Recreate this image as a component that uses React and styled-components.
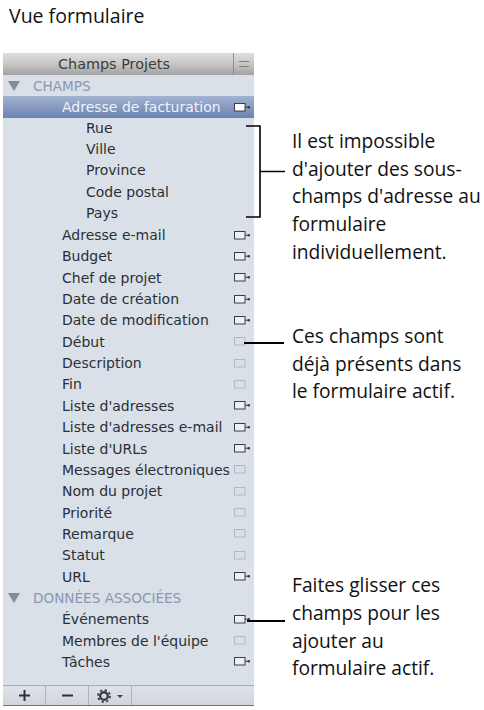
import React from "react";
import styled, { createGlobalStyle } from "styled-components";

const GlobalStyle = createGlobalStyle`
  html, body {
    margin: 0;
    padding: 0;
    background: #fff;
  }
`;

const champs = [
  { label: "Adresse e-mail", on: true },
  { label: "Budget", on: true },
  { label: "Chef de projet", on: true },
  { label: "Date de création", on: true },
  { label: "Date de modification", on: true },
  { label: "Début" },
  { label: "Description" },
  { label: "Fin" },
  { label: "Liste d'adresses", on: true },
  { label: "Liste d'adresses e-mail", on: true },
  { label: "Liste d'URLs", on: true },
  { label: "Messages électroniques" },
  { label: "Nom du projet" },
  { label: "Priorité" },
  { label: "Remarque" },
  { label: "Statut" },
  { label: "URL", on: true },
];

const sousChamps = ["Rue", "Ville", "Province", "Code postal", "Pays"];

const associees = [
  { label: "Événements", on: true },
  { label: "Membres de l'équipe" },
  { label: "Tâches", on: true },
];

const FieldIcon = ({ on, selected }) => (
  <IconSvg viewBox="0 0 17 9" width="17" height="9">
    <rect
      x="0.5"
      y="0.5"
      width="10.5"
      height="7.5"
      fill={selected ? "#fff" : on ? "#eef1f4" : "none"}
      stroke={on ? "#3b3e44" : "#b4b9c0"}
      strokeWidth="1"
    />
    {on && (
      <>
        <path d="M11 4.2h3" stroke="#3b3e44" strokeWidth="1" fill="none" />
        <circle cx="14.8" cy="4.2" r="1.2" fill="#33363c" />
      </>
    )}
  </IconSvg>
);

const Row = ({ label, on, selected }) => (
  <FieldRow $selected={selected}>
    <FieldLabel $selected={selected}>{label}</FieldLabel>
    <FieldIcon on={on} selected={selected} />
  </FieldRow>
);

const Section = ({ children }) => (
  <SectionRow>
    <Triangle viewBox="0 0 12 10" width="12" height="10">
      <path d="M0 0h12L6 10z" fill="#838b95" />
    </Triangle>
    <SectionLabel>{children}</SectionLabel>
  </SectionRow>
);

const App = () => (
  <>
    <GlobalStyle />
    <Page>
      <Title>Vue formulaire</Title>
      <Main>
        <Panel>
          <PanelHeader>
            <HeaderTitle>Champs Projets</HeaderTitle>
            <HeaderButton>
              <svg viewBox="0 0 10 6" width="10" height="6">
                <path d="M0 .5h10M0 5.5h10" stroke="#7e7e7e" strokeWidth="1" />
              </svg>
            </HeaderButton>
          </PanelHeader>
          <List>
            <Section>CHAMPS</Section>
            <Row label="Adresse de facturation" on selected />
            {sousChamps.map((s) => (
              <SubRow key={s}>{s}</SubRow>
            ))}
            {champs.map((c) => (
              <Row key={c.label} label={c.label} on={c.on} />
            ))}
            <Section>DONNÉES ASSOCIÉES</Section>
            {associees.map((c) => (
              <Row key={c.label} label={c.label} on={c.on} />
            ))}
          </List>
          <Toolbar>
            <ToolButton>
              <svg viewBox="0 0 11 11" width="11" height="11">
                <path d="M5.5 0v11M0 5.5h11" stroke="#2e3136" strokeWidth="2" />
              </svg>
            </ToolButton>
            <ToolButton>
              <svg viewBox="0 0 11 11" width="11" height="11">
                <path d="M0 5.5h11" stroke="#2e3136" strokeWidth="2" />
              </svg>
            </ToolButton>
            <ToolButton>
              <svg viewBox="0 0 26 14" width="26" height="14">
                <circle cx="7" cy="7" r="3.8" fill="none" stroke="#3a3d42" strokeWidth="2.4" />
                <circle cx="7" cy="7" r="6" fill="none" stroke="#3a3d42" strokeWidth="1.8" strokeDasharray="2.3 2.4" />
                <path d="M20 6h6l-3 3z" fill="#3a3d42" />
              </svg>
            </ToolButton>
          </Toolbar>
        </Panel>
        <Notes>
          <Note>
            Il est impossible
            <br />
            d'ajouter des sous-
            <br />
            champs d'adresse au
            <br />
            formulaire
            <br />
            individuellement.
          </Note>
          <Note $gap={56.5}>
            Ces champs sont
            <br />
            déjà présents dans
            <br />
            le formulaire actif.
          </Note>
          <Note $gap={166}>
            Faites glisser ces
            <br />
            champs pour les
            <br />
            ajouter au
            <br />
            formulaire actif.
          </Note>
        </Notes>
        <Bracket viewBox="0 0 40 93" width="40" height="93">
          <path d="M0 1H14V92H0M14 46.5H39" fill="none" stroke="#000" strokeWidth="1.6" />
        </Bracket>
        <Leader $left={244} $top={289} $width={40} />
        <Leader $left={247} $top={567} $width={38} />
      </Main>
    </Page>
  </>
);

const Page = styled.div`
  width: 484px;
  height: 710px;
  overflow: hidden;
  font-family: "Open Sans", "Liberation Sans", sans-serif;
`;
const Title = styled.div`
  padding: 2px 0 0 9px;
  height: 53px;
  box-sizing: border-box;
  font-size: 19.5px;
  color: #111;
`;
const Main = styled.div`
  display: flex;
  position: relative;
`;
const Panel = styled.div`
  margin-left: 3px;
  width: 251px;
  height: 653px;
  flex: none;
  background: #d9e0e8;
  display: flex;
  flex-direction: column;
  font-family: "DejaVu Sans", sans-serif;
`;
const PanelHeader = styled.div`
  height: 22px;
  flex: none;
  display: flex;
  background: linear-gradient(#dedede, #c6c6c6 50%, #a2a2a2);
`;
const HeaderTitle = styled.div`
  flex: 1;
  text-align: center;
  font-size: 14.4px;
  line-height: 22px;
  color: #3c3c3c;
  padding-right: 8px;
`;
const HeaderButton = styled.div`
  width: 20px;
  display: flex;
  align-items: center;
  justify-content: center;
  border-left: 1px solid #8c8c8c;
`;
const List = styled.div`
  flex: 1;
`;
const SectionRow = styled.div`
  height: 21.35px;
  display: flex;
  align-items: center;
  padding-left: 5px;
`;
const Triangle = styled.svg`
  flex: none;
`;
const SectionLabel = styled.span`
  margin-left: 13px;
  font-size: 13.6px;
  color: #8997b5;
`;
const FieldRow = styled.div`
  height: 21.35px;
  display: flex;
  align-items: center;
  justify-content: space-between;
  padding: 0 3px 0 59px;
  background: ${(p) => (p.$selected ? "linear-gradient(#a3b3d1, #6c83b0)" : "none")};
`;
const FieldLabel = styled.span`
  font-size: 14px;
  color: ${(p) => (p.$selected ? "#eef2f8" : "#2b2f36")};
  white-space: nowrap;
`;
const IconSvg = styled.svg`
  flex: none;
`;
const SubRow = styled.div`
  height: 21.35px;
  line-height: 21.35px;
  padding-left: 83px;
  font-size: 14px;
  color: #2b2f36;
`;
const Toolbar = styled.div`
  height: 21px;
  flex: none;
  display: flex;
  box-sizing: border-box;
  background: linear-gradient(#dde2e8, #d0d6dd);
  border-top: 1px solid #a9aeb4;
  border-bottom: 1px solid #6d7076;
`;
const ToolButton = styled.div`
  width: 42px;
  display: flex;
  align-items: center;
  justify-content: center;
  border-right: 1px solid #aeb4bb;
`;
const Notes = styled.div`
  margin-left: 38px;
  padding-top: 74px;
`;
const Note = styled.p`
  margin: ${(p) => p.$gap || 0}px 0 0;
  font-size: 19.2px;
  line-height: 27.7px;
  color: #111;
  white-space: nowrap;
`;
const Bracket = styled.svg`
  position: absolute;
  left: 246px;
  top: 71.5px;
`;
const Leader = styled.div`
  position: absolute;
  left: ${(p) => p.$left}px;
  top: ${(p) => p.$top}px;
  width: ${(p) => p.$width}px;
  height: 2px;
  background: #000;
`;

export default App;
